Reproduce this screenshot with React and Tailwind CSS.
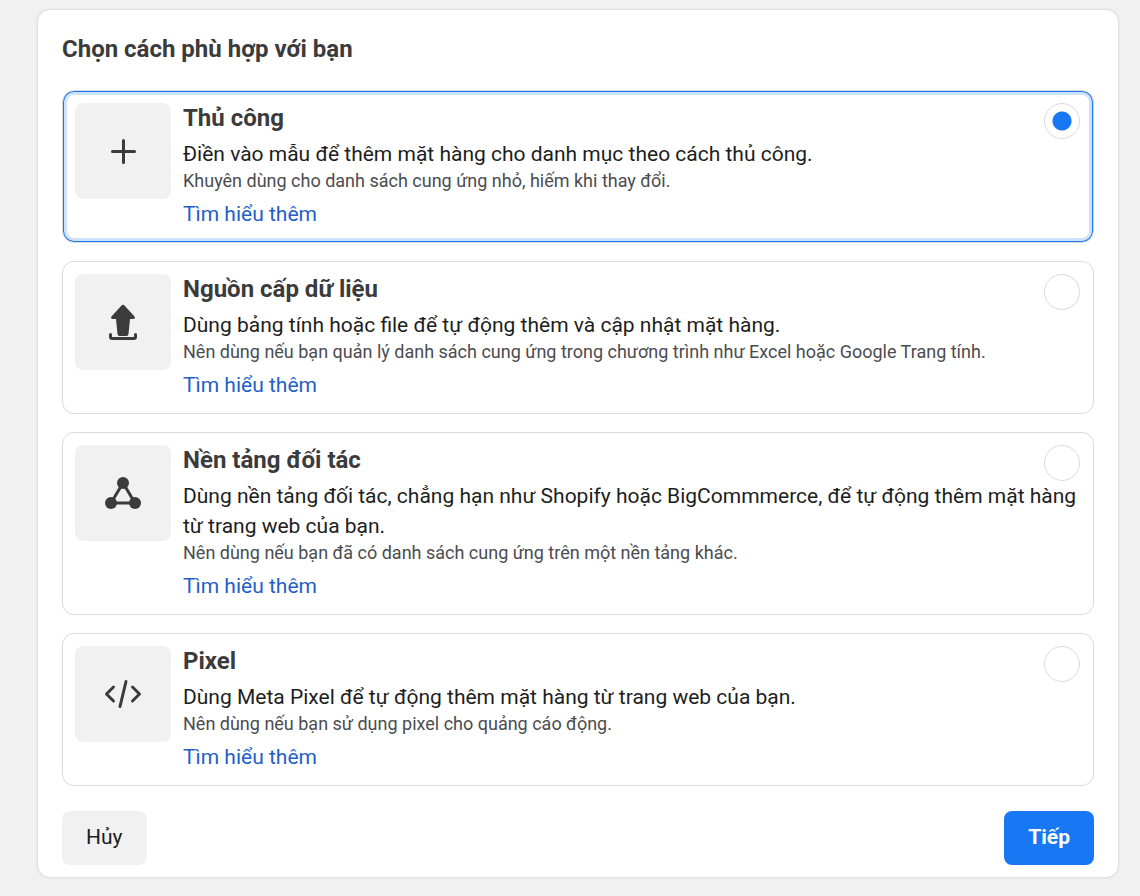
import { useState } from 'react';

const OPTIONS = [
  {
    id: 'manual',
    title: 'Thủ công',
    text: 'Điền vào mẫu để thêm mặt hàng cho danh mục theo cách thủ công.',
    hint: 'Khuyên dùng cho danh sách cung ứng nhỏ, hiếm khi thay đổi.',
    Icon: PlusIcon,
  },
  {
    id: 'feed',
    title: 'Nguồn cấp dữ liệu',
    text: 'Dùng bảng tính hoặc file để tự động thêm và cập nhật mặt hàng.',
    hint: 'Nên dùng nếu bạn quản lý danh sách cung ứng trong chương trình như Excel hoặc Google Trang tính.',
    Icon: UploadIcon,
  },
  {
    id: 'partner',
    title: 'Nền tảng đối tác',
    text: 'Dùng nền tảng đối tác, chẳng hạn như Shopify hoặc BigCommmerce, để tự động thêm mặt hàng từ trang web của bạn.',
    hint: 'Nên dùng nếu bạn đã có danh sách cung ứng trên một nền tảng khác.',
    Icon: PartnerIcon,
  },
  {
    id: 'pixel',
    title: 'Pixel',
    text: 'Dùng Meta Pixel để tự động thêm mặt hàng từ trang web của bạn.',
    hint: 'Nên dùng nếu bạn sử dụng pixel cho quảng cáo động.',
    Icon: CodeIcon,
  },
];

function PlusIcon() {
  return (
    <svg width="40" height="40" viewBox="0 0 40 40" fill="none" stroke="#3b3b3c" strokeWidth="3" strokeLinecap="round">
      <path d="M20.5 9.500v22M9.500 20.500h22" />
    </svg>
  );
}

function UploadIcon() {
  return (
    <svg width="40" height="40" viewBox="0 0 40 40" fill="#3b3b3c">
      <path d="M18.500 3.500a2 2 0 0 1 3 0l10 11c1 1.300.3 2.500-1.200 2.500H27l-1.500 15a2 2 0 0 1-2 2h-7a2 2 0 0 1-2-2L13 17H9.700c-1.500 0-2.200-1.200-1.200-2.500z" />
      <path d="M7.500 32.500v2.500q0 1.500 1.500 1.500h22q1.500 0 1.500-1.500v-2.500" fill="none" stroke="#3b3b3c" strokeWidth="3" strokeLinecap="round" />
    </svg>
  );
}

function PartnerIcon() {
  return (
    <svg width="40" height="40" viewBox="0 0 40 40" fill="#3b3b3c">
      <path d="M20 10L8 30h24z" fill="none" stroke="#3b3b3c" strokeWidth="3" />
      <circle cx="20" cy="10" r="6" />
      <circle cx="8" cy="30" r="6" />
      <circle cx="32" cy="30" r="6" />
    </svg>
  );
}

function CodeIcon() {
  return (
    <svg width="40" height="40" viewBox="0 0 40 40" fill="none" stroke="#3b3b3c" strokeWidth="3" strokeLinecap="round" strokeLinejoin="round">
      <path d="M10.500 13L3.500 20l7 7M29.500 13l7 7-7 7M23 7.500l-6 25" />
    </svg>
  );
}

function OptionCard({ option, selected, onSelect }) {
  const { id, title, text, hint, Icon } = option;

  return (
    <div
      className={`flex items-start gap-3 rounded-xl border border-[#d9dadc] pt-3 pr-[13px] pb-[13px] pl-3 ${
        selected ? 'shadow-[inset_0_0_0_1px_#1877f2,inset_0_0_0_4px_#cfe2fb]' : ''
      }`}
    >
      <div className="flex size-24 shrink-0 items-center justify-center rounded-lg bg-[#f1f1f1]">
        <Icon />
      </div>

      <div className="min-w-0 flex-1">
        <div className="relative">
          <label htmlFor={id} className="block text-2xl leading-[30px] font-bold text-[#3b3b3c]">{title}</label>
          <input
            id={id}
            type="radio"
            name="method"
            checked={selected}
            onChange={() => onSelect(id)}
            className="absolute top-0 right-0 size-9 appearance-none rounded-full border border-[#d9dadc] bg-white checked:bg-[radial-gradient(circle,#1877f2_9px,#fff_10px)]"
          />
        </div>
        <p className="mt-1.5 text-[21px] leading-[30px] text-[#1c1e21]">{text}</p>
        <p className="text-lg leading-6 text-[#4b4c4f]">{hint}</p>
        <a href="#" className="mt-1.5 inline-block align-top text-[21px] leading-[30px] text-[#2260c8]">Tìm hiểu thêm</a>
      </div>
    </div>
  );
}

export default function App() {
  const [method, setMethod] = useState('manual');

  return (
    <div className="min-h-screen bg-[#f1f1f1] pt-2.5 pr-[22px] pb-[18px] pl-[38px] font-['Roboto',sans-serif]">
      <main className="rounded-xl bg-white px-6 pt-6 pb-3 shadow-[0_0_3px_rgba(0,0,0,0.2)]">
        <h1 className="text-2xl leading-[30px] font-bold text-[#3b3b3c]">Chọn cách phù hợp với bạn</h1>

        <div className="mt-[26px] flex flex-col gap-[18px]">
          {OPTIONS.map((option) => (
            <OptionCard key={option.id} option={option} selected={method === option.id} onSelect={setMethod} />
          ))}
        </div>

        <div className="mt-[25px] flex items-center justify-between">
          <button type="button" className="h-[54px] rounded-lg bg-[#f1f1f1] px-6 text-[21px] text-[#1c1e21]">Hủy</button>
          <button type="button" className="h-[54px] rounded-lg bg-[#1877f2] px-6 text-[21px] font-bold text-white">Tiếp</button>
        </div>
      </main>
    </div>
  );
}
